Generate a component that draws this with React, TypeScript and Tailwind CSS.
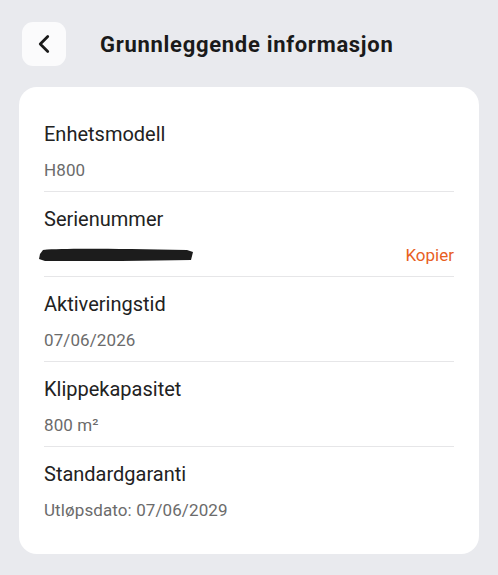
import { ChevronLeft } from "lucide-react";

const rows = [
    { label: "Enhetsmodell", value: "H800" },
    { label: "Serienummer", value: null },
    { label: "Aktiveringstid", value: "07/06/2026" },
    { label: "Klippekapasitet", value: "800 m²" },
    { label: "Standardgaranti", value: "Utløpsdato: 07/06/2029" },
];

function Redacted() {
    return (
        <svg width="160" height="18" viewBox="0 0 160 18" className="-ml-[7px]">
            <path
                d="M6 4 C30 2 80 3 150 4 L156 6 L154 14 C110 15 60 15 8 15 L2 13 L3 8 Z"
                fill="#1c1c1c"
            />
        </svg>
    );
}

export default function App() {
    return (
        <div className="min-h-[575px] w-full bg-[#e9eaee] font-['Roboto',sans-serif] pt-[22px] pb-[22px]">
            <div className="flex items-center px-[22px]">
                <button className="w-[44px] h-[44px] rounded-[11px] bg-[#fbfbfc] flex items-center justify-center">
                    <ChevronLeft size={30} strokeWidth={2.2} className="text-[#1a1a1a] -ml-[1px]" />
                </button>
                <h1 className="ml-[34px] text-[22px] font-bold text-[#1a1a1a] tracking-[0.7px]">
                    Grunnleggende informasjon
                </h1>
            </div>

            <div className="mx-[19px] mt-[21px] bg-white rounded-[18px] px-[25px] pt-[20px] pb-[23px]">
                {rows.map((row, i) => (
                    <div
                        key={row.label}
                        className={`pt-[15px] pb-[11px] ${i < rows.length - 1 ? "border-b border-[#e6e6e8]" : ""}`}
                    >
                        <div className="text-[20px] leading-[24px] text-[#222222]">{row.label}</div>
                        <div className="mt-[14px] h-[20px] flex items-center justify-between">
                            {row.value ? (
                                <span className="text-[17px] leading-[20px] tracking-[0.1px] text-[#6b6b6b]">
                                    {row.value}
                                </span>
                            ) : (
                                <>
                                    <Redacted />
                                    <span className="text-[17px] leading-[20px] text-[#e8601f]">Kopier</span>
                                </>
                            )}
                        </div>
                    </div>
                ))}
            </div>
        </div>
    );
}
